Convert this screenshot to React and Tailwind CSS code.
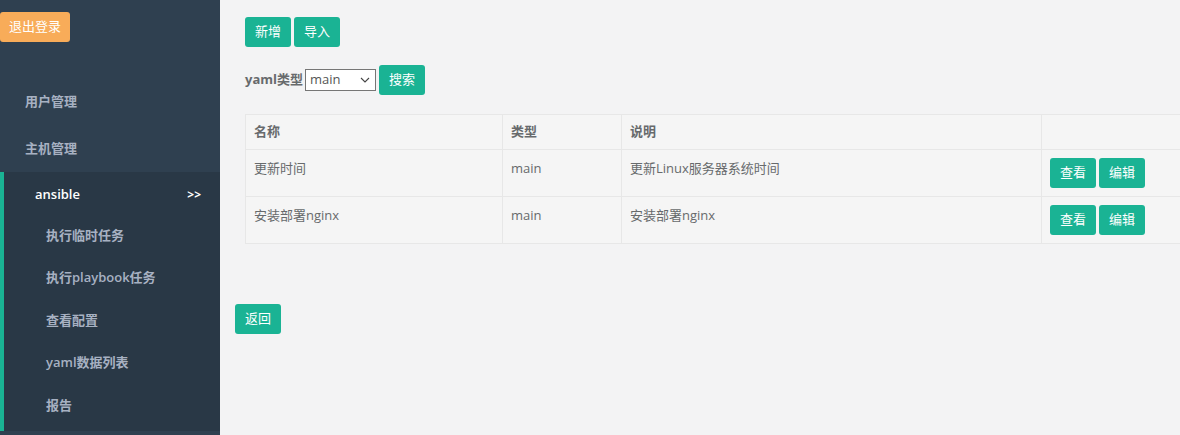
import React from "react";

const font = { fontFamily: '"Open Sans", "Noto Sans CJK SC", sans-serif' };

function GreenBtn({ children, className = "" }) {
  return (
    <button
      className={`h-[30px] w-[46px] rounded-[3px] bg-[#1ab394] text-[13px] text-white flex items-center justify-center ${className}`}
    >
      {children}
    </button>
  );
}

const subItems = ["执行临时任务", "执行playbook任务", "查看配置", "yaml数据列表", "报告"];

const rows = [
  { name: "更新时间", type: "main", desc: "更新Linux服务器系统时间" },
  { name: "安装部署nginx", type: "main", desc: "安装部署nginx" },
];

export default function App() {
  return (
    <div
      className="flex h-[435px] w-[1180px] overflow-hidden bg-[#f3f3f4] text-[13px] text-[#676a6c]"
      style={font}
    >
      {/* Sidebar */}
      <aside className="w-[220px] shrink-0 bg-[#2f4050] flex flex-col">
        <div className="pt-[12px]">
          <button className="h-[30px] w-[70px] rounded-[3px] bg-[#f8ac59] text-[13px] text-white flex items-center justify-center">
            退出登录
          </button>
        </div>
        <nav className="mt-[37px] flex flex-col">
          <div className="h-[46px] flex items-center pl-[25px] font-semibold text-[#a7b1c2]">用户管理</div>
          <div className="h-[47px] flex items-center pl-[25px] font-semibold text-[#a7b1c2]">主机管理</div>
          <div className="border-l-4 border-[#1ab394] bg-[#293846] pb-[4px]">
            <div className="h-[42px] pt-[4px] flex items-center justify-between pl-[31px] pr-[19px] font-semibold text-white">
              <span>ansible</span>
              <span className="text-[12px] font-bold">&gt;&gt;</span>
            </div>
            {subItems.map((s) => (
              <div key={s} className="h-[42.5px] flex items-center pl-[42px] font-semibold text-[#a7b1c2]">
                {s}
              </div>
            ))}
          </div>
        </nav>
      </aside>

      {/* Main */}
      <main className="flex-1 min-w-0 flex flex-col">
        <div className="pl-[25px] pt-[17px] flex gap-[3px]">
          <GreenBtn>新增</GreenBtn>
          <GreenBtn>导入</GreenBtn>
        </div>
        <div className="pl-[25px] mt-[18px] flex items-center">
          <span className="font-bold mr-[2px]">yaml类型</span>
          <div className="relative h-[22px] w-[71px] border border-[#767676] bg-white flex items-center pl-[4px] text-[13px] text-[#555]">
            <span>main</span>
            <svg className="absolute right-[5px] top-[7px]" width="10" height="6" viewBox="0 0 10 6" fill="none">
              <path d="M1 1 L5 5 L9 1" stroke="#444" strokeWidth="1.1" />
            </svg>
          </div>
          <GreenBtn className="ml-[3px]">搜索</GreenBtn>
        </div>
        <div className="pl-[25px] mt-[19px]">
          <table className="w-[960px] border-collapse bg-[#f5f5f5] table-fixed">
            <colgroup>
              <col className="w-[257px]" />
              <col className="w-[119px]" />
              <col className="w-[420px]" />
              <col />
            </colgroup>
            <thead>
              <tr className="h-[35px]">
                <th className="border border-[#e7e7e7] px-[8px] text-left font-bold">名称</th>
                <th className="border border-[#e7e7e7] px-[8px] text-left font-bold">类型</th>
                <th className="border border-[#e7e7e7] px-[8px] text-left font-bold">说明</th>
                <th className="border border-[#e7e7e7] px-[8px]"></th>
              </tr>
            </thead>
            <tbody>
              {rows.map((r) => (
                <tr key={r.name} className="h-[47px]">
                  <td className="border border-[#e7e7e7] px-[8px] pt-[8px] align-top leading-[20px]">{r.name}</td>
                  <td className="border border-[#e7e7e7] px-[8px] pt-[8px] align-top leading-[20px]">{r.type}</td>
                  <td className="border border-[#e7e7e7] px-[8px] pt-[8px] align-top leading-[20px]">{r.desc}</td>
                  <td className="border border-[#e7e7e7] px-[8px] py-[8px] align-top">
                    <div className="flex gap-[3px]">
                      <GreenBtn>查看</GreenBtn>
                      <GreenBtn>编辑</GreenBtn>
                    </div>
                  </td>
                </tr>
              ))}
            </tbody>
          </table>
        </div>
        <div className="pl-[15px] mt-[60px]">
          <GreenBtn>返回</GreenBtn>
        </div>
      </main>
    </div>
  );
}
